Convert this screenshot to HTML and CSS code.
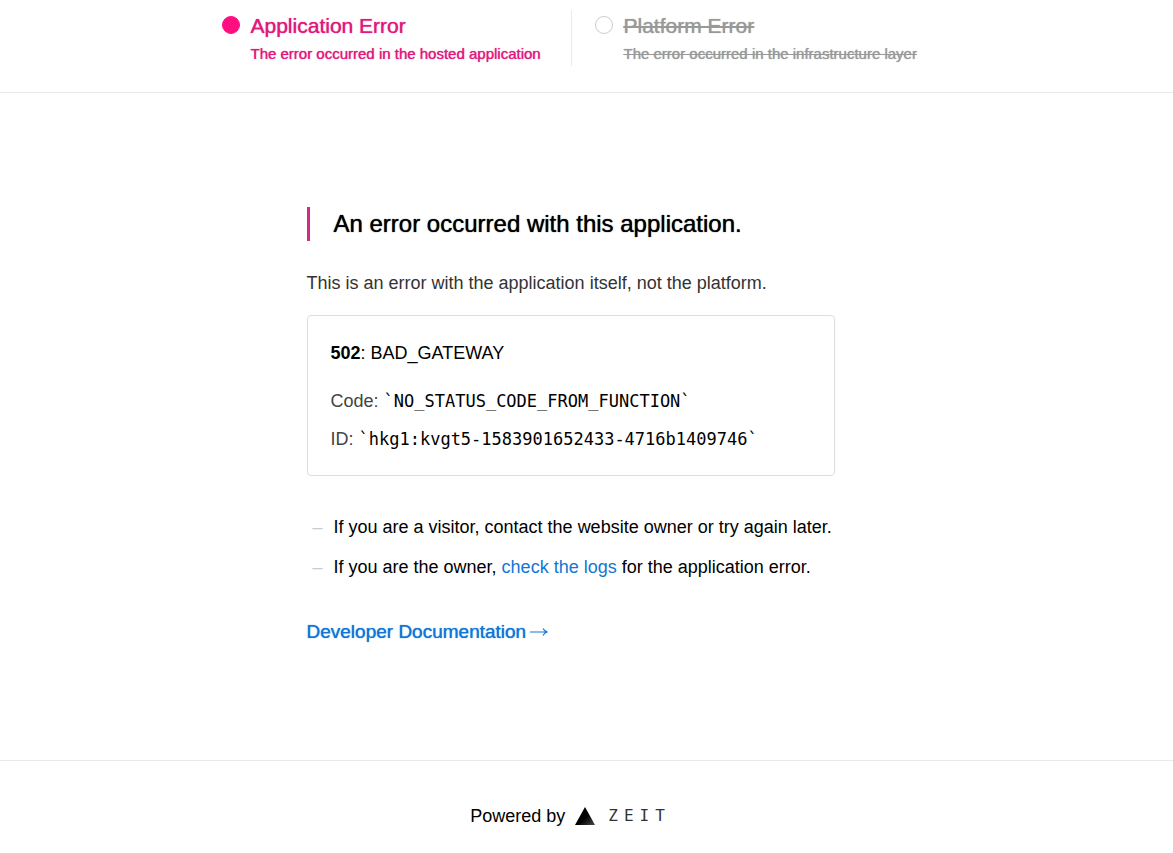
FILE: index.html
```html
<!DOCTYPE html>
<html lang="en">
<head>
<meta charset="utf-8">
<meta name="viewport" content="width=device-width, initial-scale=1">
<title>502: BAD_GATEWAY</title>
<link rel="stylesheet" href="styles.css">
</head>
<body>
<header class="status">
  <section class="status-item status-active">
    <span class="dot"></span>
    <div>
      <h2 class="status-title">Application Error</h2>
      <p class="status-text">The error occurred in the hosted application</p>
    </div>
  </section>
  <section class="status-item status-inactive">
    <span class="dot"></span>
    <div>
      <h2 class="status-title">Platform Error</h2>
      <p class="status-text">The error occurred in the infrastructure layer</p>
    </div>
  </section>
</header>
<main class="main">
  <div class="content">
    <h1 class="heading">An error occurred with this application.</h1>
    <p class="lead">This is an error with the application itself, not the platform.</p>
    <div class="card">
      <p class="card-title"><strong>502</strong>: BAD_GATEWAY</p>
      <p class="card-row">Code: <code>`NO_STATUS_CODE_FROM_FUNCTION`</code></p>
      <p class="card-row">ID: <code>`hkg1:kvgt5-1583901652433-4716b1409746`</code></p>
    </div>
    <ul class="hints">
      <li><span>If you are a visitor, contact the website owner or try again later.</span></li>
      <li><span>If you are the owner, <a href="#logs">check the logs</a> for the application error.</span></li>
    </ul>
    <a class="docs" href="#docs">Developer Documentation
      <svg class="arrow" viewBox="0 0 18 10" aria-hidden="true"><path d="M0 5H17M13 1.5Q14.5 4.500 17.500 5Q14.500 5.500 13 8.500"/></svg>
    </a>
  </div>
</main>
<footer class="footer">
  <span>Powered by</span>
  <a class="brand" href="#zeit">
    <svg class="triangle" viewBox="0 0 20 18" aria-hidden="true">
      <defs><linearGradient id="fade" x1="0.5" y1="0.6" x2="1" y2="1.1"><stop offset="0" stop-color="#000"/><stop offset="1" stop-color="#555"/></linearGradient></defs>
      <path d="M10 0L20 18H0Z" fill="url(#fade)"/>
    </svg>
    <span class="wordmark">ZEIT</span>
  </a>
</footer>
</body>
</html>
```
FILE: styles.css
```css
* { box-sizing: border-box; margin: 0; padding: 0; }

body {
  display: flex;
  flex-direction: column;
  min-height: 100vh;
  background: #fff;
  color: #000;
  font-family: "Liberation Sans", Arial, sans-serif;
  font-size: 18px;
  line-height: 24px;
}

a { color: #1176d5; text-decoration: none; }

.status {
  display: flex;
  justify-content: center;
  padding: 10px 32px 26px 0;
  border-bottom: 1px solid #eaeaea;
}

.status-item {
  display: flex;
  flex: 0 1 372px;
  gap: 11px;
  padding: 0 23px;
}

.status-item + .status-item { border-left: 1px solid #eaeaea; }

.dot {
  flex: none;
  width: 18px;
  height: 18px;
  margin-top: 6px;
  border: 1px solid #ccc;
  border-radius: 50%;
}

.status-title {
  font-size: 21px;
  font-weight: 400;
  line-height: 32px;
}

.status-text {
  font-size: 15px;
  line-height: 24px;
}

.status-active { color: #e0197d; }
.status-active .dot { background: #ff0f80; border-color: #ff0f80; }

.status-inactive { color: #999; }
.status-inactive .status-title,
.status-inactive .status-text { text-decoration: line-through; }

.status-title,
.status-text,
.heading,
.docs { text-shadow: 0 0 1px currentColor; }

.main {
  display: flex;
  flex: 1;
  justify-content: center;
  padding: 114px 32px 114px 0;
}

.content { width: 100%; max-width: 528px; }

.heading {
  margin-bottom: 30px;
  padding-left: 24px;
  border-left: 3px solid #d42a86;
  font-size: 24px;
  font-weight: 400;
  line-height: 34px;
}

.lead { margin-bottom: 20px; color: #333; }

.card {
  padding: 25px 23px 24px;
  border: 1px solid #ddd;
  border-radius: 4px;
}

.card-title { margin-bottom: 24px; }
.card-row { color: #444; }
.card-row + .card-row { margin-top: 14px; }

.card code {
  color: #000;
  font-family: "DejaVu Sans Mono", monospace;
  font-size: 17px;
}

.hints {
  display: grid;
  gap: 16px;
  margin: 39px 0 41px;
  list-style: none;
}

.hints li { display: flex; }
.hints li::before {
  flex: none;
  width: 21px;
  padding-left: 6px;
  color: #ccc;
  content: "–";
}

.docs {
  display: inline-flex;
  align-items: center;
  gap: 4px;
  font-size: 19px;
}

.arrow {
  width: 18px;
  height: 10px;
  fill: none;
  stroke: currentColor;
  stroke-width: 1.2;
}

.footer {
  display: flex;
  align-items: center;
  justify-content: center;
  gap: 10px;
  padding: 43px 32px 25px 0;
  border-top: 1px solid #eaeaea;
}

.brand { display: flex; align-items: center; gap: 13px; color: #333; }
.triangle { width: 20px; height: 18px; }

.wordmark {
  font-family: "DejaVu Sans Mono", monospace;
  font-size: 16px;
  letter-spacing: 6px;
}
```
